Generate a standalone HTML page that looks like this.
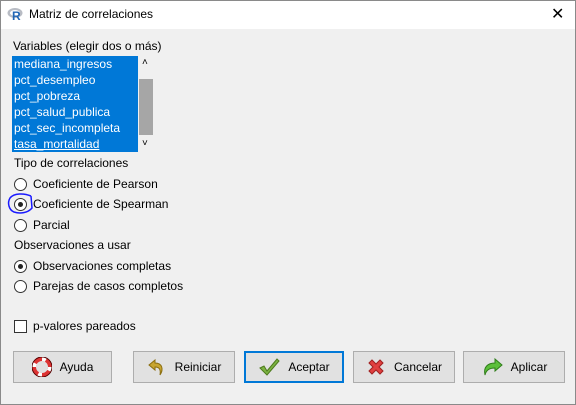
<!DOCTYPE html><html><head><style>
body{margin:0;width:576px;height:405px;overflow:hidden;font-family:"Liberation Sans",sans-serif;font-size:12px;color:#000}
.win{position:absolute;left:0;top:0;width:574px;height:403px;border:1px solid #8a8a8a;background:#f0f0f0}
.title{position:absolute;left:0;top:0;width:574px;height:28px;background:#fff}
.t{position:absolute;white-space:nowrap}
.lb{position:absolute;left:11px;top:55px;width:126px;height:96px;background:#0078d7;color:#fff}
.lb div{position:absolute;left:2px}
.sb{position:absolute;left:137px;top:55px;width:16px;height:96px;background:#f0f0f0}
.rad{position:absolute;width:11px;height:11px;border:1px solid #333;border-radius:50%;background:#fff}
.rad.on::after{content:"";position:absolute;left:3px;top:3px;width:5px;height:5px;border-radius:50%;background:#222}
.btn{position:absolute;top:350px;height:32px;border:1px solid #adadad;background:#e1e1e1;box-sizing:border-box;display:flex;align-items:center;justify-content:center;gap:8px;font-size:12px}
</style></head><body><div class="win">
<div class="title">
<svg style="position:absolute;left:6px;top:6px" width="16" height="14"><ellipse cx="8" cy="6" rx="7.5" ry="5" fill="#b8bcc4"/><ellipse cx="8" cy="6" rx="5" ry="3" fill="#fff"/><text x="5" y="13" font-size="12" font-weight="bold" fill="#2166b5" font-family="Liberation Sans">R</text></svg>
<span class="t" style="left:28px;top:6px;font-size:12px">Matriz de correlaciones</span>
<span class="t" style="left:550px;top:3px;font-size:16px">✕</span>
</div>
<span class="t" style="left:12px;top:38px">Variables (elegir dos o más)</span>
<div class="lb">
<div style="top:1px">mediana_ingresos</div>
<div style="top:17px">pct_desempleo</div>
<div style="top:33px">pct_pobreza</div>
<div style="top:49px">pct_salud_publica</div>
<div style="top:65px">pct_sec_incompleta</div>
<div style="top:81px;text-decoration:underline">tasa_mortalidad</div>
</div>
<div class="sb"><div style="position:absolute;left:1px;top:23px;width:14px;height:56px;background:#a6a6a6"></div>
<span class="t" style="left:4px;top:1px;font-size:10px">˄</span><span class="t" style="left:4px;top:82px;font-size:10px">˅</span></div>
<span class="t" style="left:13px;top:155px">Tipo de correlaciones</span>
<div class="rad" style="left:13px;top:177px"></div><span class="t" style="left:32px;top:176px">Coeficiente de Pearson</span>
<div class="rad on" style="left:13px;top:197px"></div><span class="t" style="left:32px;top:196px">Coeficiente de Spearman</span>
<svg style="position:absolute;left:5px;top:191px" width="28" height="24"><path d="M25 4 C18 1 8 1 4 6 C1 11 3 18 8 20 C14 22 22 21 26 16 L25 4" fill="none" stroke="#1a1aff" stroke-width="1.5"/></svg>
<div class="rad" style="left:13px;top:218px"></div><span class="t" style="left:32px;top:217px">Parcial</span>
<span class="t" style="left:13px;top:237px">Observaciones a usar</span>
<div class="rad on" style="left:13px;top:259px"></div><span class="t" style="left:32px;top:258px">Observaciones completas</span>
<div class="rad" style="left:13px;top:279px"></div><span class="t" style="left:32px;top:278px">Parejas de casos completos</span>
<div style="position:absolute;left:13px;top:319px;width:11px;height:11px;border:1px solid #333;background:#fff"></div><span class="t" style="left:32px;top:318px">p-valores pareados</span>
<div class="btn" style="left:12px;width:99px"><svg width="20" height="20"><circle cx="10" cy="10" r="8" fill="none" stroke="#d33" stroke-width="4"/><circle cx="10" cy="10" r="8" fill="none" stroke="#fff" stroke-width="4" stroke-dasharray="4 8.5"/><circle cx="10" cy="10" r="10" fill="none" stroke="#500" stroke-width="1"/></svg>Ayuda</div>
<div class="btn" style="left:132px;width:102px"><svg width="20" height="20"><path d="M8 3 L2 8 L8 13 L8 10 C12 10 14 12 13 18 C17 12 15 6 8 6Z" fill="#c8a530" stroke="#8a6d10"/></svg>Reiniciar</div>
<div class="btn" style="left:243px;width:100px;border:2px solid #0078d7"><svg width="22" height="20"><path d="M2 11 L6 9 L9 14 L19 2 L21 4 L9 18Z" fill="#7cb342" stroke="#4d7a1c"/></svg>Aceptar</div>
<div class="btn" style="left:352px;width:102px"><svg width="20" height="20"><path d="M3 6 L6 3 L10 7 L14 3 L17 6 L13 10 L17 14 L14 17 L10 13 L6 17 L3 14 L7 10Z" fill="#e04040" stroke="#a02020"/></svg>Cancelar</div>
<div class="btn" style="left:462px;width:102px"><svg width="22" height="20"><path d="M14 2 L21 8 L14 14 L14 11 C9 11 5 13 4 18 C2 10 7 6 14 6Z" fill="#5cbf3a" stroke="#2f7d1a"/></svg>Aplicar</div>
</div></body></html>
